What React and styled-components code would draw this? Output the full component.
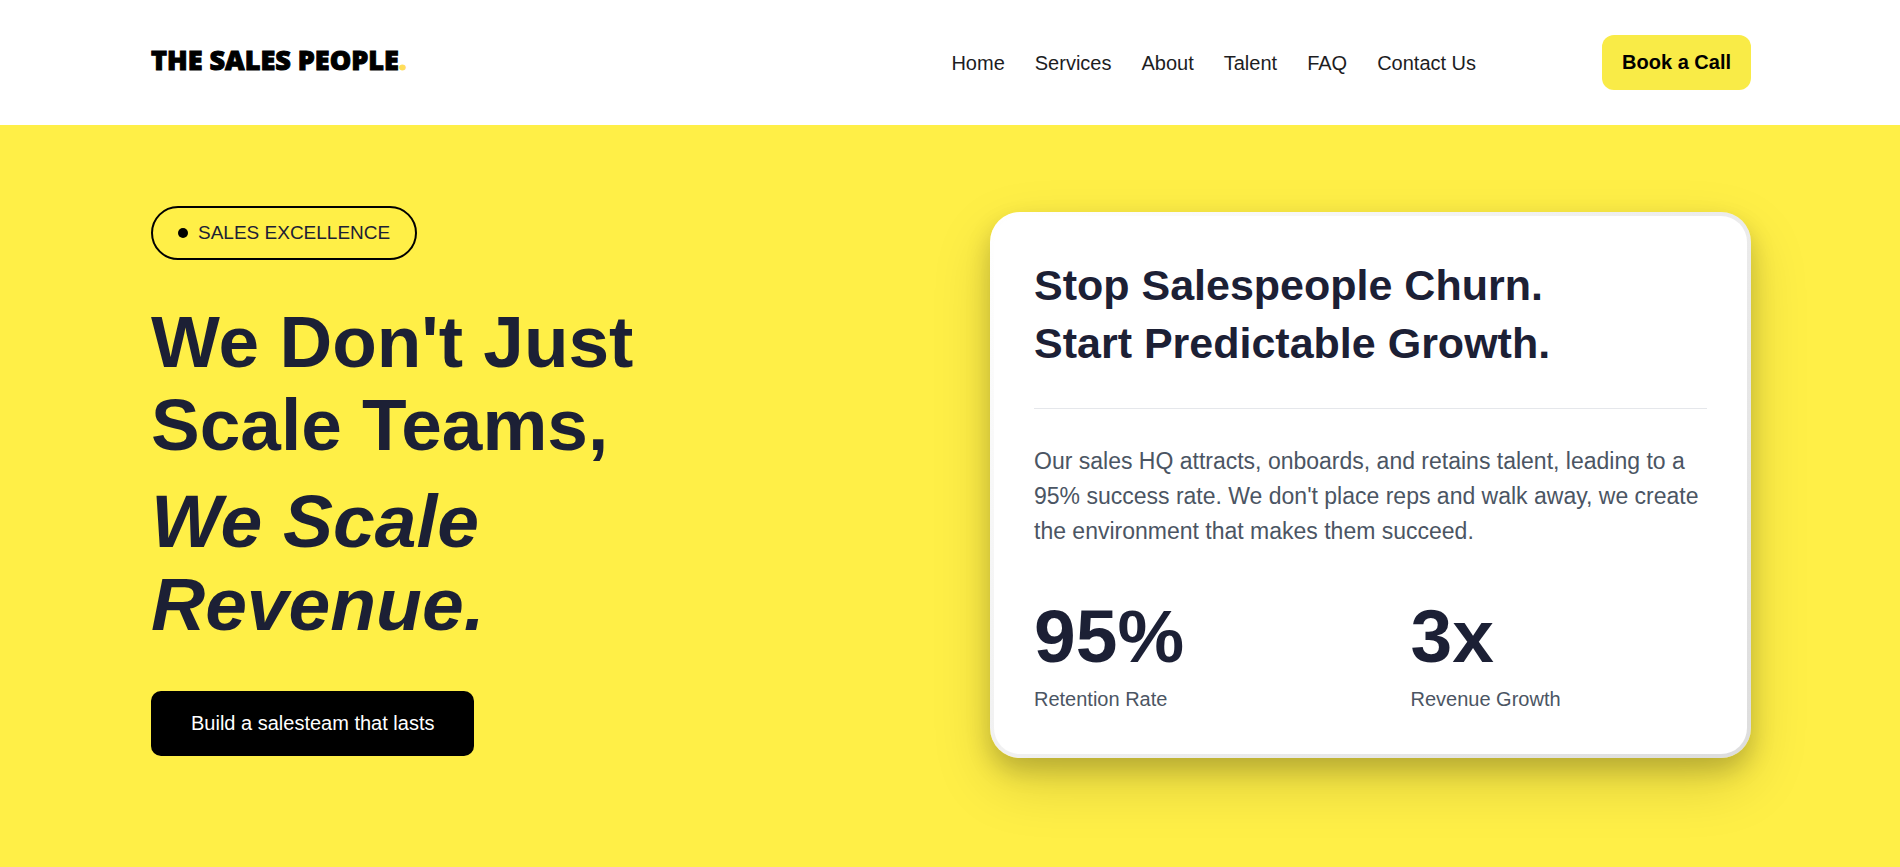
import styled, { createGlobalStyle } from "styled-components";

const links = ["Home", "Services", "About", "Talent", "FAQ", "Contact Us"];

const stats = [
  { value: "95%", label: "Retention Rate" },
  { value: "3x", label: "Revenue Growth" },
];

export default function App() {
  return (
    <>
      <GlobalStyle />
      <Header>
        <HeaderContent>
          <Logo href="#home">
            THE SALES PEOPLE<span>.</span>
          </Logo>
          <Nav>
            {links.map((link) => (
              <NavLink key={link} href={`#${link}`}>
                {link}
              </NavLink>
            ))}
          </Nav>
          <CallButton type="button">Book a Call</CallButton>
        </HeaderContent>
      </Header>
      <Hero>
        <HeroContent>
          <Intro>
            <Badge>
              <Dot />
              SALES EXCELLENCE
            </Badge>
            <Title>
              We Don't Just
              <br />
              Scale Teams,
              <em>
                We Scale
                <br />
                Revenue.
              </em>
            </Title>
            <BuildButton type="button">Build a salesteam that lasts</BuildButton>
          </Intro>
          <Card>
            <CardTitle>
              Stop Salespeople Churn.
              <br />
              Start Predictable Growth.
            </CardTitle>
            <CardText>
              Our sales HQ attracts, onboards, and retains talent, leading to a
              95% success rate. We don't place reps and walk away, we create the
              environment that makes them succeed.
            </CardText>
            <Stats>
              {stats.map(({ value, label }) => (
                <div key={label}>
                  <StatValue>{value}</StatValue>
                  <StatLabel>{label}</StatLabel>
                </div>
              ))}
            </Stats>
          </Card>
        </HeroContent>
      </Hero>
    </>
  );
}

const GlobalStyle = createGlobalStyle`
  * {
    box-sizing: border-box;
    margin: 0;
    padding: 0;
  }

  body {
    background: #ffef47;
    color: #1c2035;
    font-family: "Liberation Sans", Arial, sans-serif;
  }

  button {
    border: none;
    font-family: inherit;
    cursor: pointer;
  }

  a {
    text-decoration: none;
  }
`;

const Header = styled.header`
  background: #ffffff;
  padding: 35px 40px;
`;

const HeaderContent = styled.div`
  display: flex;
  align-items: center;
  max-width: 1602px;
  margin: 0 auto;
  padding-left: 2px;
`;

const Logo = styled.a`
  margin-right: auto;
  padding-bottom: 6px;
  color: #000000;
  font-family: "Noto Sans", sans-serif;
  font-size: 27px;
  font-weight: 900;
  line-height: 32px;
  -webkit-text-stroke: 1px currentColor;

  span {
    color: #ffde59;
  }
`;

const Nav = styled.nav`
  display: flex;
  gap: 30px;
  margin-right: 126px;
`;

const NavLink = styled.a`
  color: #1d1d1f;
  font-size: 20px;
  line-height: 24px;
`;

const CallButton = styled.button`
  padding: 16px 20px;
  border-radius: 12px;
  background: #f9eb47;
  color: #000000;
  font-size: 20px;
  font-weight: 700;
  line-height: 23px;
`;

const Hero = styled.main`
  padding: 81px 40px 104px;
`;

const HeroContent = styled.div`
  display: grid;
  grid-template-columns: 1fr 1fr;
  gap: 78px;
  align-items: center;
  max-width: 1602px;
  margin: 0 auto;
  padding-left: 2px;
`;

const Intro = styled.section`
  display: flex;
  flex-direction: column;
  align-items: flex-start;
  padding-bottom: 8px;
`;

const Badge = styled.p`
  display: flex;
  align-items: center;
  gap: 10px;
  padding: 14px 25px;
  border: 2px solid #000000;
  border-radius: 27px;
  font-size: 19px;
  line-height: 22px;
`;

const Dot = styled.span`
  width: 10px;
  height: 10px;
  border-radius: 50%;
  background: #000000;
`;

const Title = styled.h1`
  margin-top: 40px;
  font-size: 73px;
  font-weight: 700;
  line-height: 83px;

  em {
    display: block;
    margin-top: 14px;
    font-size: 75px;
  }
`;

const BuildButton = styled.button`
  margin-top: 45px;
  padding: 21px 40px;
  border-radius: 10px;
  background: #000000;
  color: #ffffff;
  font-size: 20px;
  line-height: 23px;
`;

const Card = styled.section`
  padding: 40px;
  border: 4px solid transparent;
  border-radius: 30px;
  background:
    linear-gradient(#ffffff, #ffffff) padding-box,
    linear-gradient(135deg, #ffffff, #dddddd) border-box;
  box-shadow:
    0 24px 60px rgba(0, 0, 0, 0.15),
    0 12px 24px rgba(0, 0, 0, 0.18);
`;

const CardTitle = styled.h2`
  padding-bottom: 36px;
  border-bottom: 1px solid #e5e7eb;
  font-size: 43px;
  font-weight: 700;
  line-height: 58px;
`;

const CardText = styled.p`
  margin-top: 35px;
  color: #4b5563;
  font-size: 23px;
  line-height: 35px;
`;

const Stats = styled.div`
  display: grid;
  grid-template-columns: 1fr 1fr;
  gap: 80px;
  margin-top: 50px;
`;

const StatValue = styled.p`
  font-size: 75px;
  font-weight: 700;
  line-height: 75px;
`;

const StatLabel = styled.p`
  margin-top: 10px;
  color: #4b5563;
  font-size: 20px;
  line-height: 30px;
`;
